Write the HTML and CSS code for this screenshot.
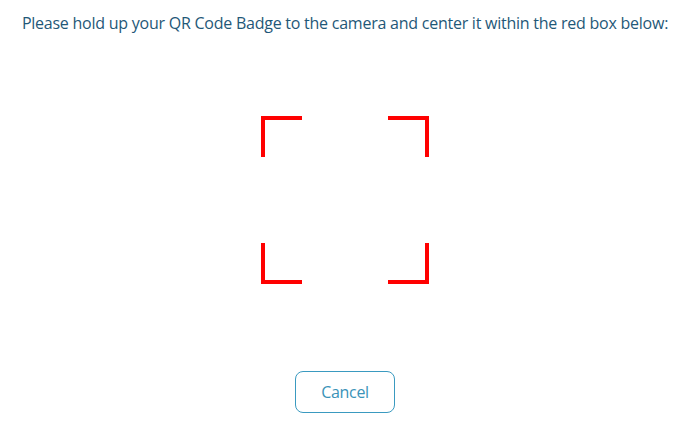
FILE: index.html
```html
<!DOCTYPE html>
<html>
<head>
<meta charset="utf-8">
<link rel="stylesheet" href="styles.css">
</head>
<body>
<main class="scanner">
  <p class="instructions">Please hold up your QR Code Badge to the camera and center it within the red box below:</p>
  <svg class="frame" width="168" height="168" viewBox="0 0 168 168" aria-hidden="true">
    <g fill="none" stroke="#ff0000" stroke-width="4" stroke-linecap="butt" stroke-linejoin="miter">
      <polyline points="2,41 2,2 41,2"/>
      <polyline points="127,2 166,2 166,41"/>
      <polyline points="2,127 2,166 41,166"/>
      <polyline points="127,166 166,166 166,127"/>
    </g>
  </svg>
  <button class="cancel" type="button">Cancel</button>
</main>
</body>
</html>
```
FILE: styles.css
```css
html, body {
  margin: 0;
  padding: 0;
  background: #ffffff;
}
body {
  font-family: "Open Sans", "Noto Sans", sans-serif;
}
.scanner {
  width: 690px;
  display: flex;
  flex-direction: column;
  align-items: center;
}
.instructions {
  margin: 12px 0 0 0;
  font-size: 16px;
  line-height: 22px;
  letter-spacing: -0.24px;
  color: #1f5878;
  text-align: center;
  white-space: nowrap;
}
.frame {
  display: block;
  margin-top: 82px;
}
.cancel {
  margin-top: 87px;
  width: 100px;
  height: 42px;
  border: 1px solid #3a9ac0;
  border-radius: 8px;
  background: #ffffff;
  color: #3a93b8;
  font-family: "Open Sans", "Noto Sans", sans-serif;
  font-size: 16px;
  letter-spacing: -0.3px;
  padding: 0;
}
```
